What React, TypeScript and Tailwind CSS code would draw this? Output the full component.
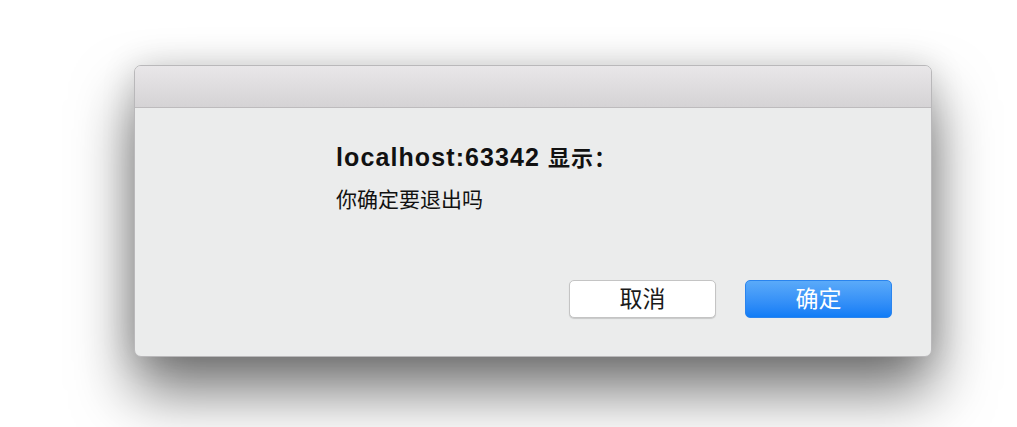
import React from 'react';

const App: React.FC = () => {
  return (
    <div
      className="w-[1017px] h-[427px] bg-white overflow-hidden pt-[65px] pl-[134px]"
      style={{ fontFamily: '"Liberation Sans", "Noto Sans CJK SC", sans-serif' }}
    >
      {/* Dialog */}
      <div className="w-[798px] h-[292px] flex flex-col rounded-[7px] border border-[#b9b8ba] bg-[#ebecec] shadow-[0_34px_60px_rgba(0,0,0,0.55),0_0_34px_rgba(0,0,0,0.14)] overflow-hidden">
        {/* Title bar */}
        <div className="h-[42px] shrink-0 bg-gradient-to-b from-[#e9e7e9] to-[#d5d3d5] border-b border-[#bdbbbd]" />

        {/* Body */}
        <div className="flex-1 flex flex-col pl-[201px] pr-[39px] pt-[34px] pb-[38px]">
          <div className="text-[#111] leading-[30px] font-bold flex items-baseline">
            <span className="text-[25px] tracking-[1.1px]">localhost:63342</span>
            <span className="text-[22px] ml-[8px] tracking-[1px]">显示：</span>
          </div>
          <div className="text-[21px] text-[#111] leading-[28px] mt-[12px]">你确定要退出吗</div>

          <div className="mt-auto flex justify-end gap-[29px]">
            <button className="w-[147px] h-[38px] rounded-[5px] bg-white border border-[#c4c4c4] shadow-[0_1px_1px_rgba(0,0,0,0.15)] text-[23px] leading-none text-[#1a1a1a]">
              取消
            </button>
            <button className="w-[147px] h-[38px] rounded-[5px] bg-gradient-to-b from-[#5aaaf9] to-[#0f7cf6] border border-[#2a84ee] text-[23px] leading-none text-white">
              确定
            </button>
          </div>
        </div>
      </div>
    </div>
  );
};

export default App;
